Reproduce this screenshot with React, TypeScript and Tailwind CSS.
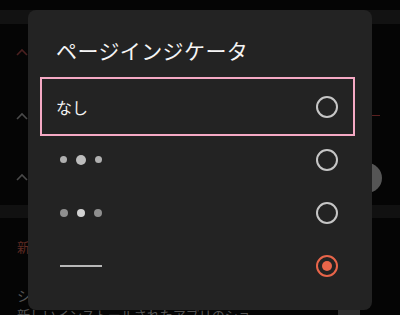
import React from "react";

const font = { fontFamily: '"Noto Sans CJK JP", "Noto Sans", sans-serif' };

function Chevron({ color }: { color: string }) {
  return (
    <svg width="12" height="8" viewBox="0 0 12 8" fill="none">
      <path d="M1 7 L6 2 L11 7" stroke={color} strokeWidth="1.6" />
    </svg>
  );
}

function Radio({ selected }: { selected?: boolean }) {
  return selected ? (
    <div className="w-[22px] h-[22px] rounded-full border-2 border-[#e8654a] flex items-center justify-center">
      <div className="w-[10px] h-[10px] rounded-full bg-[#e8654a]" />
    </div>
  ) : (
    <div className="w-[22px] h-[22px] rounded-full border-2 border-[#c6c6c6]" />
  );
}

export default function App() {
  const rows = [
    {
      key: "none",
      content: <span className="text-[16px] text-[#f2f2f2] leading-none">なし</span>,
      selected: false,
      focused: true,
    },
    {
      key: "dots-large",
      content: (
        <div className="flex items-center gap-[9px] ml-[4px]">
          <div className="w-[7px] h-[7px] rounded-full bg-[#b0b0b0]" />
          <div className="w-[10px] h-[10px] rounded-full bg-[#bdbdbd]" />
          <div className="w-[7px] h-[7px] rounded-full bg-[#b0b0b0]" />
        </div>
      ),
      selected: false,
    },
    {
      key: "dots",
      content: (
        <div className="flex items-center gap-[9px] ml-[4px]">
          <div className="w-[8px] h-[8px] rounded-full bg-[#8f8f8f]" />
          <div className="w-[8px] h-[8px] rounded-full bg-[#d2d2d2]" />
          <div className="w-[8px] h-[8px] rounded-full bg-[#8f8f8f]" />
        </div>
      ),
      selected: false,
    },
    {
      key: "line",
      content: <div className="w-[42px] h-[2px] bg-[#b8b8b8] ml-[4px]" />,
      selected: true,
    },
  ];

  return (
    <div className="relative w-[400px] h-[315px] overflow-hidden bg-[#050505]" style={font}>
      {/* background page (dimmed) */}
      <div className="flex flex-col w-full h-full">
        <div className="h-[10px]" />
        <div className="h-[14px] bg-[#121212]" />
        <div className="relative flex-1">
          <div className="absolute left-[16px] top-[24px]"><Chevron color="#4a2020" /></div>
          <div className="absolute left-[16px] top-[88px]"><Chevron color="#4a4a4a" /></div>
          <div className="absolute left-[16px] top-[149px]"><Chevron color="#4a4a4a" /></div>
          <div className="absolute right-[20px] top-[91px] w-[8px] h-[1px] bg-[#5a2020]" />
          <div className="absolute right-[18px] top-[139px] w-[30px] h-[30px] rounded-full bg-[#555555]" />
          <div className="absolute left-0 right-0 top-[181px] h-[13px] bg-[#111111]" />
          <div className="absolute left-[17px] top-[213px] text-[13px] text-[#5e2a22]">新</div>
          <div className="absolute left-[17px] top-[262px] text-[14px] leading-[18px] text-[#555555]">シ</div>
          <div className="absolute left-[17px] top-[283px] text-[13px] leading-[16px] text-[#555555] whitespace-nowrap">新しいインストールされたアプリのショ</div>
          <div className="absolute left-[338px] top-[279px] w-[22px] h-[14px] bg-[#2e2e2e]" />
        </div>
      </div>

      {/* dialog */}
      <div className="absolute left-[28px] top-[10px] w-[344px] h-[300px] rounded-[8px] bg-[#232323] flex flex-col">
        <div className="pl-[28px] pt-[26px] h-[70px] text-[21px] leading-[28px] text-[#f5f5f5] tracking-[0.4px]">
          ページインジケータ
        </div>
        <div className="flex flex-col pl-[15px] pr-[20px]">
          {rows.map((r) => (
            <div
              key={r.key}
              className={
                r.focused
                  ? "h-[53px] flex items-center justify-between pl-[13px] pr-[14px] outline-[2.5px] outline-[#f5a9c4] outline-offset-[1px]"
                  : "h-[53px] flex items-center justify-between pl-[13px] pr-[14px]"
              }
            >
              {r.content}
              <Radio selected={r.selected} />
            </div>
          ))}
        </div>
      </div>
    </div>
  );
}
